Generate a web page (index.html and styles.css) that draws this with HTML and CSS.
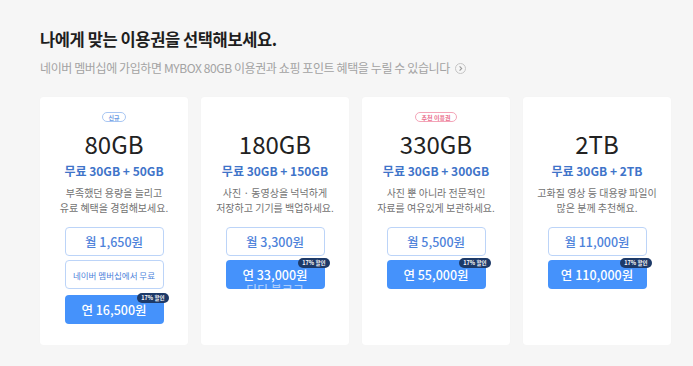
FILE: index.html
```html
<!DOCTYPE html>
<html>
<head>
	<title>MYBOX 이용권</title>
	<meta charset="utf-8">
	<link rel="stylesheet" href="styles.css">
</head>
<body>
	<div class="wrap">
		<h1 class="title">나에게 맞는 이용권을 선택해보세요.</h1>
		<p class="subtitle">
			네이버 멤버십에 가입하면 MYBOX 80GB 이용권과 쇼핑 포인트 혜택을 누릴 수 있습니다
			<svg class="more" width="11" height="11" viewBox="0 0 11 11">
				<circle cx="5.5" cy="5.5" r="5" fill="none" stroke="#c4c4c4" stroke-width="1"/>
				<path d="M4.6 3.4 L6.7 5.5 L4.6 7.6" fill="none" stroke="#9a9a9a" stroke-width="1.1"/>
			</svg>
		</p>

		<div class="plans">
			<div class="plan">
				<div class="tagslot"><span class="tag tagnew">신규</span></div>
				<div class="size">80GB</div>
				<div class="free">무료 30GB + 50GB</div>
				<div class="desc">부족했던 용량을 늘리고<br>유료 혜택을 경험해보세요.</div>
				<div class="btn line">월 1,650원</div>
				<div class="btn line small">네이버 멤버십에서 무료</div>
				<div class="btn fill first">연 16,500원<span class="off">17% 할인</span></div>
			</div>

			<div class="plan">
				<div class="tagslot"></div>
				<div class="size">180GB</div>
				<div class="free">무료 30GB + 150GB</div>
				<div class="desc">사진 · 동영상을 넉넉하게<br>저장하고 기기를 백업하세요.</div>
				<div class="btn line">월 3,300원</div>
				<div class="btn fill">연 33,000원<span class="off">17% 할인</span><span class="mark">디디 블로그</span></div>
			</div>

			<div class="plan">
				<div class="tagslot"><span class="tag tagbest">추천 이용권</span></div>
				<div class="size">330GB</div>
				<div class="free">무료 30GB + 300GB</div>
				<div class="desc">사진 뿐 아니라 전문적인<br>자료를 여유있게 보관하세요.</div>
				<div class="btn line">월 5,500원</div>
				<div class="btn fill">연 55,000원<span class="off">17% 할인</span></div>
			</div>

			<div class="plan">
				<div class="tagslot"></div>
				<div class="size">2TB</div>
				<div class="free">무료 30GB + 2TB</div>
				<div class="desc">고화질 영상 등 대용량 파일이<br>많은 분께 추천해요.</div>
				<div class="btn line">월 11,000원</div>
				<div class="btn fill">연 110,000원<span class="off">17% 할인</span></div>
			</div>
		</div>
	</div>
</body>
</html>
```

FILE: styles.css
```css
body {
	margin: 0;
	background-color: #f6f6f6;
	font-family: "Noto Sans CJK KR", "Noto Sans", sans-serif;
	color: #222;
}
.wrap {
	padding: 27px 19px 0 40px;
}
.title {
	margin: 0;
	font-size: 16.5px;
	line-height: 24px;
	font-weight: 700;
	letter-spacing: -0.4px;
	color: #1e1e1e;
}
.subtitle {
	margin: 9px 0 0;
	font-size: 12px;
	line-height: 16px;
	color: #a3a3a3;
	display: flex;
	align-items: center;
	gap: 5px;
	letter-spacing: -0.4px;
}
.plans {
	display: flex;
	gap: 13px;
	margin-top: 21px;
}
.plan {
	width: 148px;
	height: 248px;
	box-sizing: border-box;
	background-color: #fff;
	border-radius: 3px;
	box-shadow: 0 0 1px rgba(0,0,0,0.06);
	display: flex;
	flex-direction: column;
	align-items: center;
	padding-top: 15px;
}
.tagslot {
	height: 10px;
	display: flex;
	justify-content: center;
}
.tag {
	display: block;
	height: 10px;
	line-height: 9px;
	box-sizing: border-box;
	padding: 0 4px;
	border-radius: 6px;
	font-size: 6px;
	font-weight: 700;
	background-color: #fff;
}
.tagnew {
	border: 1px solid #a9c7f3;
	color: #6c9be3;
	padding: 0 5px;
}
.tagbest {
	border: 1px solid #f4a5b8;
	color: #ea6f8e;
	padding: 0 6px;
}
.size {
	margin-top: 7px;
	font-size: 24px;
	line-height: 30px;
	font-weight: 400;
	color: #222;
}
.free {
	margin-top: 4px;
	font-size: 12px;
	line-height: 16px;
	font-weight: 700;
	color: #3f74c9;
}
.desc {
	margin-top: 6px;
	font-size: 10px;
	line-height: 15px;
	color: #727272;
	text-align: center;
}
.btn {
	position: relative;
	width: 99px;
	height: 29px;
	box-sizing: border-box;
	border-radius: 4px;
	display: flex;
	align-items: center;
	justify-content: center;
	font-size: 12.5px;
	font-weight: 500;
}
.line {
	margin-top: 12px;
	border: 1px solid #bcd4f8;
	color: #4d82da;
	background-color: #fff;
}
.line + .line {
	margin-top: 4px;
}
.small {
	font-size: 8.5px;
	font-weight: 400;
}
.fill {
	margin-top: 4px;
	background-color: #4592fb;
	color: #fff;
}
.fill.first {
	margin-top: 6px;
}
.off {
	position: absolute;
	top: -2px;
	right: -5px;
	height: 10px;
	line-height: 10px;
	padding: 0 4px;
	border-radius: 5px;
	background-color: #1d3a68;
	color: #fff;
	font-size: 5.5px;
	font-weight: 700;
}
.mark {
	position: absolute;
	left: 0;
	right: 0;
	bottom: 0;
	height: 7px;
	overflow: hidden;
	text-align: center;
	font-size: 12px;
	line-height: 16px;
	color: #a9cbfb;
}
```
